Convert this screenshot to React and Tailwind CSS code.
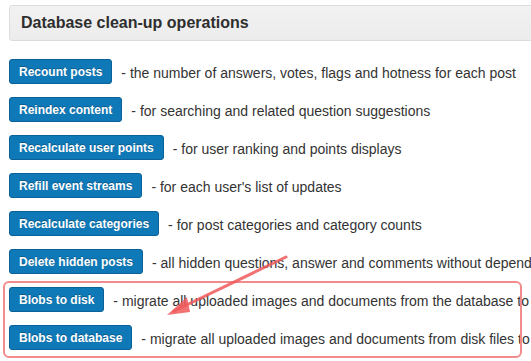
import React from 'react';

const ops = [
  { label: 'Recount posts', desc: '- the number of answers, votes, flags and hotness for each post' },
  { label: 'Reindex content', desc: '- for searching and related question suggestions' },
  { label: 'Recalculate user points', desc: '- for user ranking and points displays' },
  { label: 'Refill event streams', desc: "- for each user's list of updates" },
  { label: 'Recalculate categories', desc: '- for post categories and category counts' },
  { label: 'Delete hidden posts', desc: '- all hidden questions, answer and comments without dependents' },
  { label: 'Blobs to disk', desc: '- migrate all uploaded images and documents from the database to disk files' },
  { label: 'Blobs to database', desc: '- migrate all uploaded images and documents from disk files to the database' },
];

const App = () => {
  return (
    <div
      className="relative w-[531px] h-[361px] overflow-hidden bg-white text-[#333]"
      style={{ fontFamily: '"Liberation Sans", Arial, sans-serif' }}
    >
      {/* Header */}
      <div className="mt-[5px] ml-[9px] -mr-4 h-[36px] border border-[#dcdcdc] rounded-[3px] bg-gradient-to-b from-[#f2f2f2] to-[#ececec] flex items-center pl-[11px]">
        <h2 className="text-[16px] font-bold text-[#2e2e2e]">Database clean-up operations</h2>
      </div>

      {/* Operations */}
      <div className="mt-[18px] pl-[9px] flex flex-col gap-[13px]">
        {ops.map((op) => (
          <div key={op.label} className="flex items-center whitespace-nowrap">
            <button className="h-[25px] px-[9px] border border-[#0a6298] rounded-[3px] bg-[#0f78b6] text-white text-[12px] font-bold leading-none [text-shadow:0_-1px_0_rgba(0,0,0,0.25)]">
              {op.label}
            </button>
            <span className="ml-[9px] pt-[4px] text-[14px] text-[#333]">{op.desc}</span>
          </div>
        ))}
      </div>

      {/* Highlight annotation */}
      <div className="absolute left-[3px] top-[281px] w-[519px] h-[77px] border-2 border-[#f28b8b] rounded-[6px] pointer-events-none" />
      <svg className="absolute left-0 top-0 pointer-events-none" width="531" height="361" viewBox="0 0 531 361">
        <line x1="286" y1="257" x2="174" y2="311" stroke="#f0595c" strokeOpacity="0.85" strokeWidth="3" strokeLinecap="round" />
        <path d="M167 315 L187 297 L190 312 Z" fill="#f0595c" fillOpacity="0.85" />
      </svg>
    </div>
  );
};

export default App;
